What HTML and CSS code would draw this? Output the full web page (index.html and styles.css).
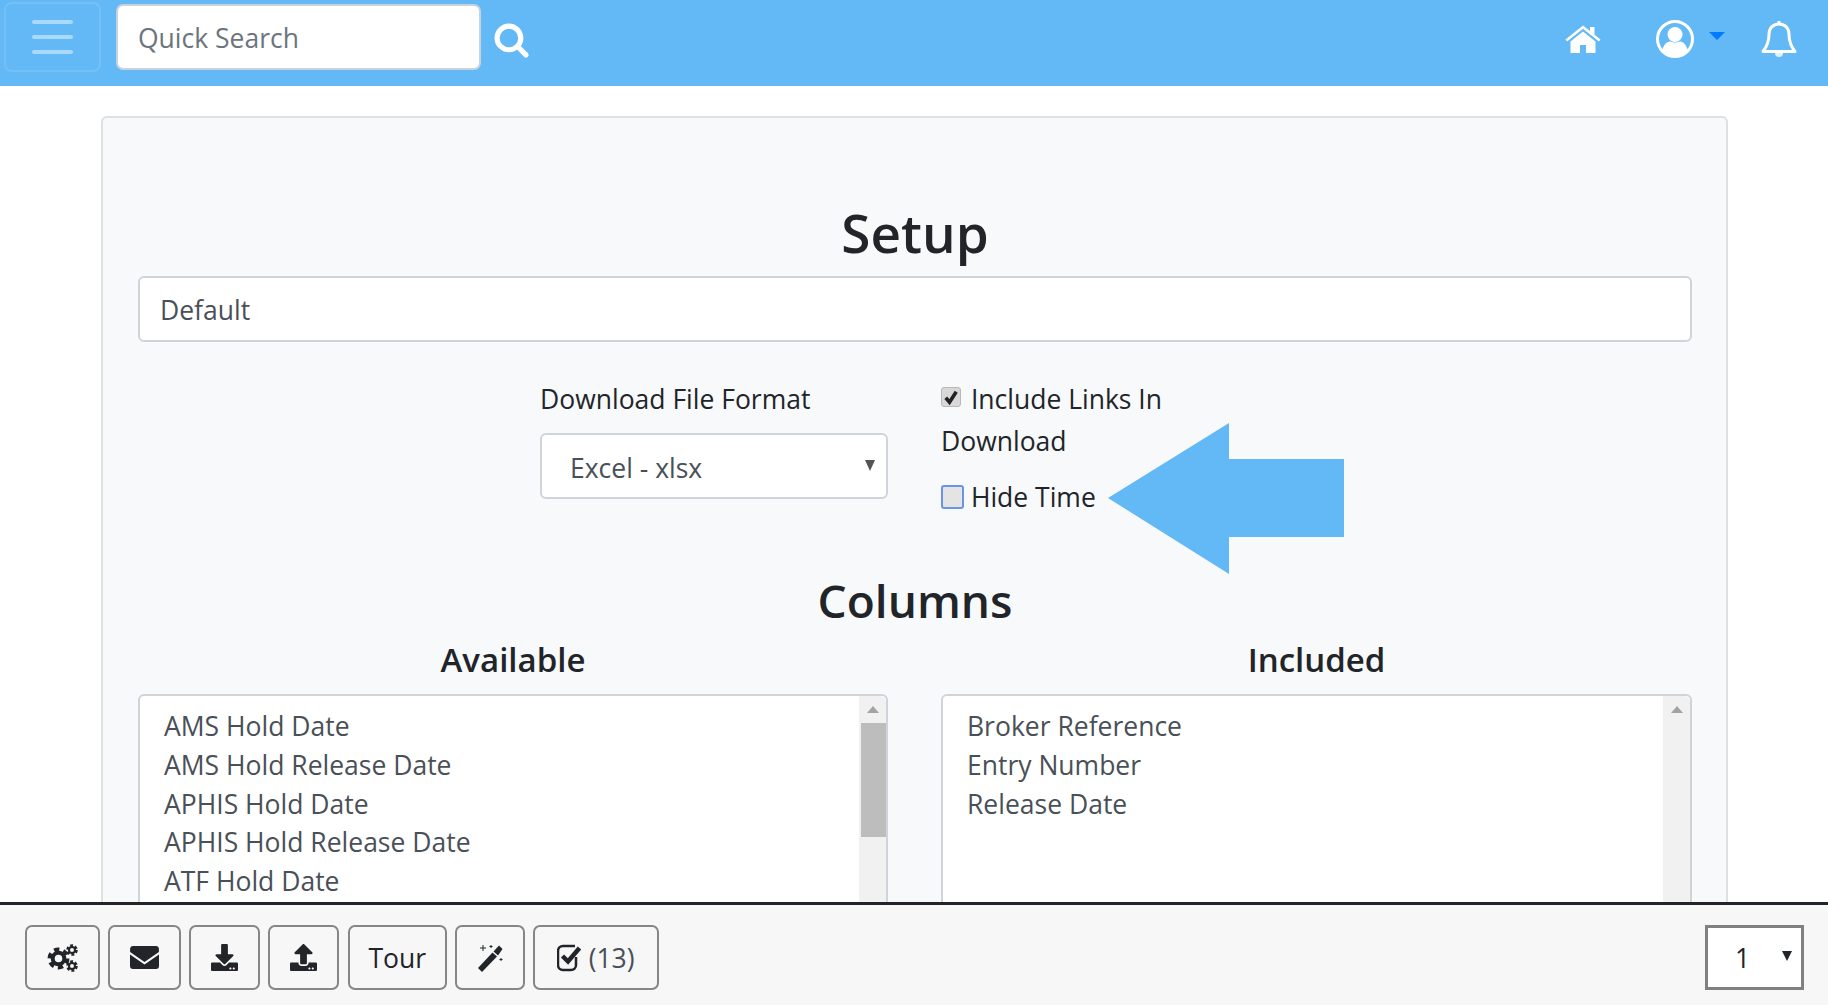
FILE: index.html
```html
<!DOCTYPE html>
<html lang="en">
<head>
  <meta charset="UTF-8">
  <meta name="viewport" content="width=device-width, initial-scale=1.0">
  <title>Setup</title>
  <link rel="stylesheet" href="styles.css">
</head>
<body>
  <header class="topbar">
    <button class="menu-toggle" type="button" aria-label="Menu">
      <span></span><span></span><span></span>
    </button>
    <input class="quick-search" type="text" placeholder="Quick Search">
    <svg class="search-icon" viewBox="0 0 34 34" aria-hidden="true">
      <circle cx="14.500" cy="14.500" r="11.500"/>
      <path d="M23 23l8 8"/>
    </svg>
    <div class="topbar-right">
      <svg class="home-icon" viewBox="0 0 36 28" aria-hidden="true">
        <path d="M18 0.500L0.500 14.500l1.600 2L18 3.800l15.900 12.700 1.600-2-6-4.800V2h-4.500v4.100z"/>
        <path d="M18 6.500L5.500 16.600V28h9.500v-8h6v8h9.500V16.600z"/>
      </svg>
      <svg class="user-icon" viewBox="0 0 38 38" aria-hidden="true">
        <circle class="user-ring" cx="19" cy="19" r="17.500"/>
        <circle cx="19" cy="14.500" r="7.500"/>
        <path d="M6.500 30c1-6 5-8.500 8-8.500 2.800 1.300 6.200 1.300 9 0 3 0 7 2.500 8 8.500-3.200 3.700-7.800 6-12.500 6s-9.300-2.300-12.500-6z"/>
      </svg>
      <span class="user-caret"></span>
      <svg class="bell-icon" viewBox="0 0 36 38" aria-hidden="true">
        <path class="bell-body" d="M18 4c-6.500 0-10 4.800-10 10.500 0 8-2 12-6 17h32c-4-5-6-9-6-17C28 8.800 24.500 4 18 4z"/>
        <path class="bell-top" d="M18 1v3"/>
        <path class="bell-clap" d="M14 33a4 4 0 0 0 8 0z"/>
      </svg>
    </div>
  </header>

  <main class="content">
    <section class="setup-card">
      <h1 class="setup-title">Setup</h1>
      <input class="name-input" type="text" value="Default">

      <div class="format-row">
        <div class="format-col">
          <label class="field-label">Download File Format</label>
          <div class="select-box">
            <span>Excel - xlsx</span>
            <i class="select-caret"></i>
          </div>
        </div>
        <div class="check-col">
          <div class="check-line">
            <span class="check-box checked">
              <svg viewBox="0 0 12 12" aria-hidden="true"><path d="M2.500 6.500l2.500 3 4.500-7"/></svg>
            </span>
            Include Links In Download
          </div>
          <div class="check-line hide-time">
            <span class="check-box focused"></span>
            Hide Time
          </div>
        </div>
      </div>

      <h2 class="columns-title">Columns</h2>
      <div class="columns-grid">
        <div class="column">
          <h3 class="column-title">Available</h3>
          <div class="list-box">
            <ul class="list-items">
              <li>AMS Hold Date</li>
              <li>AMS Hold Release Date</li>
              <li>APHIS Hold Date</li>
              <li>APHIS Hold Release Date</li>
              <li>ATF Hold Date</li>
            </ul>
            <div class="scroll-track">
              <i class="scroll-up"></i>
              <div class="scroll-thumb"></div>
            </div>
          </div>
        </div>
        <div class="column">
          <h3 class="column-title">Included</h3>
          <div class="list-box">
            <ul class="list-items">
              <li>Broker Reference</li>
              <li>Entry Number</li>
              <li>Release Date</li>
            </ul>
            <div class="scroll-track">
              <i class="scroll-up"></i>
            </div>
          </div>
        </div>
      </div>
    </section>

    <!-- callout arrow sits on top of the form -->
    <svg class="callout-arrow" viewBox="0 0 236 151" aria-hidden="true">
      <path d="M0 75L121 0v36h115v78H121v37z"/>
    </svg>
  </main>

  <footer class="toolbar">
    <button class="tool-btn" type="button" aria-label="Settings">
      <svg class="tool-icon gears" viewBox="0 0 31 28" aria-hidden="true">
        <circle class="gear-teeth big" cx="11.500" cy="14.500" r="8.500"/>
        <circle class="gear-ring big" cx="11.500" cy="14.500" r="5.800"/>
        <circle class="gear-teeth small" cx="25" cy="6" r="4.300"/>
        <circle class="gear-ring small" cx="25" cy="6" r="3"/>
        <circle class="gear-teeth small" cx="25" cy="22" r="4.300"/>
        <circle class="gear-ring small" cx="25" cy="22" r="3"/>
      </svg>
    </button>
    <button class="tool-btn" type="button" aria-label="Email">
      <svg class="tool-icon" viewBox="0 0 29 23" aria-hidden="true">
        <path d="M3 0h23a3 3 0 0 1 2.900 2.300V6L14.500 16 .1 6V2.300A3 3 0 0 1 3 0z"/>
        <path d="M0 8.500l14.500 10 14.500-10V20a3 3 0 0 1-3 3H3a3 3 0 0 1-3-3z"/>
      </svg>
    </button>
    <button class="tool-btn" type="button" aria-label="Download">
      <svg class="tool-icon" viewBox="0 0 512 512" aria-hidden="true">
        <path d="M216 0h80c13.300 0 24 10.700 24 24v168h87.700c17.800 0 26.700 21.500 14.100 34.100L269.700 378.300c-7.500 7.500-19.800 7.500-27.300 0L90.100 226.100c-12.600-12.600-3.700-34.100 14.100-34.100H192V24c0-13.300 10.700-24 24-24zm296 376v112c0 13.300-10.700 24-24 24H24c-13.300 0-24-10.700-24-24V376c0-13.300 10.700-24 24-24h146.700l49 49c20.100 20.100 52.500 20.100 72.600 0l49-49H488c13.300 0 24 10.700 24 24zm-124 88c0-11-9-20-20-20s-20 9-20 20 9 20 20 20 20-9 20-20zm64 0c0-11-9-20-20-20s-20 9-20 20 9 20 20 20 20-9 20-20z"/>
      </svg>
    </button>
    <button class="tool-btn" type="button" aria-label="Upload">
      <svg class="tool-icon" viewBox="0 0 512 512" aria-hidden="true">
        <path d="M296 384h-80c-13.300 0-24-10.700-24-24V192h-87.700c-17.800 0-26.700-21.500-14.100-34.100L242.300 5.700c7.500-7.500 19.800-7.500 27.300 0l152.200 152.200c12.600 12.600 3.700 34.100-14.100 34.100H320v168c0 13.300-10.700 24-24 24zm216-8v112c0 13.300-10.700 24-24 24H24c-13.300 0-24-10.700-24-24V376c0-13.300 10.700-24 24-24h136v8c0 30.900 25.100 56 56 56h80c30.900 0 56-25.100 56-56v-8h136c13.300 0 24 10.700 24 24zm-124 88c0-11-9-20-20-20s-20 9-20 20 9 20 20 20 20-9 20-20zm64 0c0-11-9-20-20-20s-20 9-20 20 9 20 20 20 20-9 20-20z"/>
      </svg>
    </button>
    <button class="tool-btn tour-btn" type="button">Tour</button>
    <button class="tool-btn" type="button" aria-label="Magic">
      <svg class="tool-icon" viewBox="0 0 26 28" aria-hidden="true">
        <path d="M1 24l14.500-15.500 4.500 4L5 28z"/>
        <path class="wand-tip" d="M16.500 7.500L22 1.500l3.500 3.500-4.500 6.500z"/>
        <path class="sparkle" d="M6 1v6M3 4h6M14 1v3M12.500 2.500h3M24 14v3M22.500 15.500h3"/>
      </svg>
    </button>
    <button class="tool-btn count-btn" type="button">
      <svg class="check-icon" viewBox="0 0 25 28" aria-hidden="true">
        <path class="check-frame" d="M19 13v8a5 5 0 0 1-5 5H6a5 5 0 0 1-5-5V7a5 5 0 0 1 5-5h12"/>
        <path class="check-tick" d="M5.500 12l5.500 5.500L22.500 4"/>
      </svg>
      (13)
    </button>
    <div class="page-select">
      <span>1</span>
      <i class="page-caret"></i>
    </div>
  </footer>
</body>
</html>
```

FILE: styles.css
```css
* {
  box-sizing: border-box;
}
html, body {
  height: 100%;
}
body {
  margin: 0;
  display: flex;
  flex-direction: column;
  overflow: hidden;
  background-color: #fff;
  color: #212529;
  font-family: "Open Sans", "Liberation Sans", sans-serif;
  font-size: 26.500px;
}

/* top bar */
.topbar {
  flex: none;
  display: flex;
  align-items: flex-start;
  height: 86px;
  padding: 2px 31px 0 4px;
  background-color: #63b9f5;
}
.menu-toggle {
  display: flex;
  flex-direction: column;
  justify-content: center;
  gap: 11px;
  width: 97px;
  height: 70px;
  padding: 0 26px;
  background: none;
  border: 2px solid #74c0f6;
  border-radius: 8px;
}
.menu-toggle span {
  display: block;
  height: 4px;
  border-radius: 2px;
  background-color: #a9dafb;
}
.quick-search {
  width: 365px;
  height: 66px;
  margin: 2px 0 0 15px;
  padding: 2px 20px 0;
  border: 2px solid #c6d2de;
  border-radius: 7px;
  color: #495057;
  font: inherit;
}
.quick-search::placeholder {
  color: #6c757d;
  opacity: 1;
}
.search-icon {
  width: 35px;
  height: 35px;
  margin: 21px 0 0 13px;
  fill: none;
  stroke: #fff;
  stroke-width: 5;
  stroke-linecap: round;
}
.topbar-right {
  position: relative;
  display: flex;
  align-items: flex-start;
  margin-left: auto;
}
.home-icon {
  width: 36px;
  height: 28px;
  margin-top: 23px;
  fill: #fff;
}
.user-icon {
  width: 38px;
  height: 38px;
  margin: 18px 0 0 55px;
  fill: #fff;
}
.user-ring {
  fill: none;
  stroke: #fff;
  stroke-width: 3;
}
.user-caret {
  width: 0;
  height: 0;
  margin: 30px 0 0 15px;
  border-top: 8px solid #007bff;
  border-left: 8px solid transparent;
  border-right: 8px solid transparent;
}
.bell-icon {
  width: 36px;
  height: 38px;
  margin: 18px 0 0 36px;
  fill: none;
  stroke: #fff;
  stroke-width: 3;
  stroke-linejoin: round;
}
.bell-clap {
  fill: #fff;
  stroke: none;
  opacity: 0.8;
}

/* main form */
.content {
  position: relative;
  flex: 1;
  min-height: 0;
  overflow: hidden;
  padding: 30px 100px 0 101px;
}
.setup-card {
  height: 900px;
  padding: 80px 34px 0 35px;
  background-color: #f8f9fa;
  border: 2px solid #dfe0e2;
  border-radius: 6px;
}
.setup-title {
  margin: 0 0 8px;
  font-size: 53px;
  font-weight: 600;
  line-height: 70px;
  text-align: center;
}
.name-input {
  display: block;
  width: 100%;
  height: 66px;
  padding: 2px 20px 0;
  border: 2px solid #ced4da;
  border-radius: 6px;
  color: #495057;
  font: inherit;
}
.format-row {
  display: flex;
  gap: 53px;
  margin: 36px 0 0 402px;
}
.format-col {
  width: 348px;
}
.field-label {
  display: block;
  height: 42px;
  line-height: 42px;
}
.select-box {
  display: flex;
  align-items: center;
  justify-content: space-between;
  height: 66px;
  margin-top: 13px;
  padding: 3px 11px 0 28px;
  background-color: #fff;
  border: 2px solid #ced4da;
  border-radius: 6px;
  color: #495057;
}
.select-caret {
  margin-top: -5px;
  border-top: 11px solid #555;
  border-left: 5px solid transparent;
  border-right: 5px solid transparent;
}
.check-col {
  width: 290px;
  line-height: 42px;
}
.check-line.hide-time {
  margin-top: 14px;
}
.check-box {
  display: inline-block;
  width: 20px;
  height: 20px;
  margin-right: 3px;
  vertical-align: 2px;
  background-color: #d8d8d8;
  border: 1px solid #b8b8b8;
  border-radius: 3px;
}
.check-box svg {
  display: block;
  fill: none;
  stroke: #222;
  stroke-width: 2.400;
}
.check-box.focused {
  width: 23px;
  height: 24px;
  margin-right: 0;
  vertical-align: -2px;
  background-color: #e4e4e4;
  border: 2px solid #6b94e6;
}
.columns-title {
  margin: 52px 0 0;
  font-size: 46px;
  font-weight: 600;
  line-height: 60px;
  text-align: center;
}
.columns-grid {
  display: grid;
  grid-template-columns: 750px 1fr;
  gap: 53px;
}
.column-title {
  margin: 0;
  font-size: 33px;
  font-weight: 600;
  line-height: 60px;
  text-align: center;
}
.list-box {
  display: flex;
  justify-content: space-between;
  height: 300px;
  margin-top: 4px;
  background-color: #fff;
  border: 2px solid #ced4da;
  border-radius: 6px;
}
.list-items {
  margin: 0;
  padding: 11px 0 0 24px;
  list-style: none;
  color: #495057;
  line-height: 38.800px;
}
.scroll-track {
  flex: none;
  width: 27px;
  padding: 10px 0 0 0;
  background-color: #f1f1f1;
  border-radius: 0 6px 6px 0;
}
.scroll-up {
  display: block;
  width: 0;
  margin: 0 auto;
  border-bottom: 7px solid #a3a3a3;
  border-left: 6px solid transparent;
  border-right: 6px solid transparent;
}
.scroll-thumb {
  width: 25px;
  height: 114px;
  margin: 10px 0 0 2px;
  background-color: #bdbdbd;
}

.callout-arrow {
  position: absolute;
  top: 337px;
  left: 1108px;
  width: 236px;
  height: 151px;
  fill: #63b9f5;
}

/* bottom toolbar */
.toolbar {
  flex: none;
  display: flex;
  align-items: center;
  gap: 8px;
  height: 103px;
  padding: 5px 24px 0 25px;
  background-color: #f7f7f7;
  border-top: 3px solid #212529;
}
.tool-btn {
  display: flex;
  align-items: center;
  justify-content: center;
  height: 65px;
  padding: 0 20px;
  background: none;
  border: 2px solid #868686;
  border-radius: 7px;
  color: #212529;
  font: inherit;
}
.tour-btn {
  margin-left: 1px;
  padding: 0 18.500px;
}
.tool-icon {
  display: block;
  width: 31px;
  height: 28px;
  fill: #212529;
}
.tool-btn:nth-child(2) .tool-icon {
  width: 29px;
  height: 23px;
}
.tool-btn:nth-child(3) .tool-icon,
.tool-btn:nth-child(4) .tool-icon {
  width: 27px;
  height: 27px;
}
.tool-btn:nth-child(6) .tool-icon {
  width: 26px;
  height: 28px;
}
.gear-teeth {
  fill: none;
  stroke: #212529;
}
.gear-teeth.big {
  stroke-width: 5;
  stroke-dasharray: 5 3.900;
}
.gear-teeth.small {
  stroke-width: 3;
  stroke-dasharray: 2.700 1.800;
}
.gear-ring {
  fill: none;
  stroke: #212529;
}
.gear-ring.big {
  stroke-width: 4;
}
.gear-ring.small {
  stroke-width: 2;
}
.wand-tip {
  fill: #212529;
}
.sparkle {
  fill: none;
  stroke: #212529;
  stroke-width: 1;
}
.check-icon {
  width: 25px;
  height: 28px;
  margin-right: 7px;
  fill: none;
  stroke: #212529;
}
.check-frame {
  stroke-width: 2.500;
}
.check-tick {
  stroke-width: 4.500;
}
.count-btn {
  padding: 0 22px;
  color: #495057;
}
.page-select {
  display: flex;
  align-items: center;
  justify-content: space-between;
  width: 99px;
  height: 65px;
  margin-left: auto;
  padding: 0 9px 0 27px;
  background-color: #fff;
  border: 3px solid #808080;
}
.page-caret {
  margin-top: -4px;
  border-top: 10px solid #212529;
  border-left: 5px solid transparent;
  border-right: 5px solid transparent;
}
```
